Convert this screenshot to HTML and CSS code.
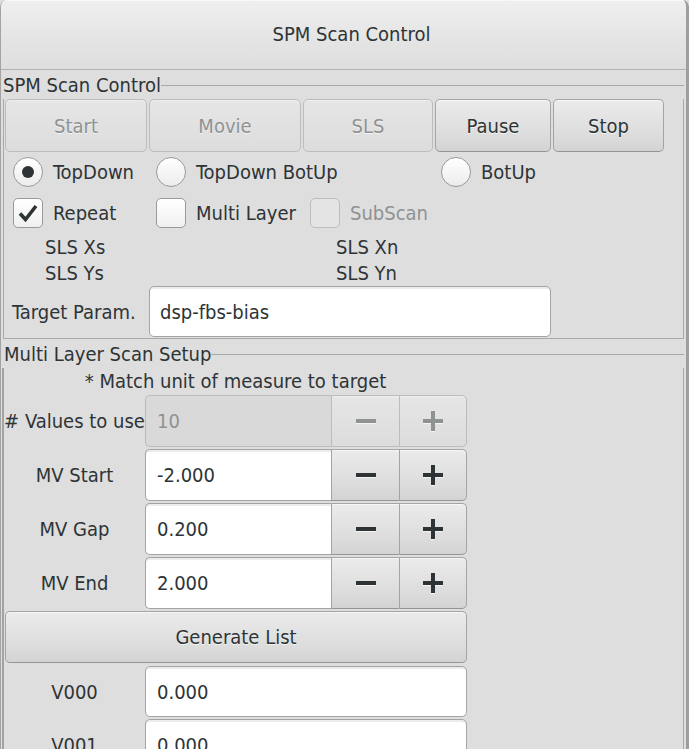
FILE: index.html
```html
<!DOCTYPE html>
<html>
<head>
<meta charset="utf-8">
<title>SPM Scan Control</title>
<link rel="stylesheet" href="styles.css">
</head>
<body>
<div class="window">
  <div class="titlebar"><span class="title">SPM Scan Control</span></div>
  <div class="content">
    <section class="frame">
      <div class="frame-head"><span class="frame-title">SPM Scan Control</span></div>
      <div class="frame-body">
        <div class="btn-row">
          <button class="btn w-start" disabled>Start</button>
          <button class="btn w-movie" disabled>Movie</button>
          <button class="btn w-sls" disabled>SLS</button>
          <button class="btn w-pause">Pause</button>
          <button class="btn w-stop">Stop</button>
        </div>
        <div class="radio-row">
          <div class="opt"><span class="radio on"></span>TopDown</div>
          <div class="opt"><span class="radio"></span>TopDown BotUp</div>
          <div class="opt"><span class="radio"></span>BotUp</div>
        </div>
        <div class="check-row">
          <div class="opt"><span class="check"><svg width="28" height="28" viewBox="0 0 28 28"><path d="M6 14.5 L11.5 20.5 L22 7" fill="none" stroke="#2e3436" stroke-width="3.6"/></svg></span>Repeat</div>
          <div class="opt"><span class="check"></span>Multi Layer</div>
          <div class="opt dis"><span class="check dis"></span>SubScan</div>
        </div>
        <div class="sls-grid">
          <span>SLS Xs</span><span>SLS Xn</span>
          <span>SLS Ys</span><span>SLS Yn</span>
        </div>
        <div class="target-row">
          <span class="target-label">Target Param.</span>
          <div class="entry target-entry">dsp-fbs-bias</div>
        </div>
      </div>
    </section>

    <section class="frame frame-ml">
      <div class="frame-head"><span class="frame-title ml-title">Multi Layer Scan Setup</span></div>
      <div class="frame-body ml-body">
        <div class="note">* Match unit of measure to target</div>
        <div class="ml-grid">
          <span class="lbl">#&nbsp;Values to use</span>
          <div class="spin dis">
            <div class="spin-entry">10</div>
            <div class="spin-btn"><svg width="20" height="20" viewBox="0 0 20 20"><rect x="0" y="8" width="20" height="4"/></svg></div>
            <div class="spin-btn last"><svg width="20" height="20" viewBox="0 0 20 20"><rect x="0" y="8" width="20" height="4"/><rect x="8" y="0" width="4" height="20"/></svg></div>
          </div>

          <span class="lbl">MV Start</span>
          <div class="spin">
            <div class="spin-entry">-2.000</div>
            <div class="spin-btn"><svg width="20" height="20" viewBox="0 0 20 20"><rect x="0" y="8" width="20" height="4"/></svg></div>
            <div class="spin-btn last"><svg width="20" height="20" viewBox="0 0 20 20"><rect x="0" y="8" width="20" height="4"/><rect x="8" y="0" width="4" height="20"/></svg></div>
          </div>

          <span class="lbl">MV Gap</span>
          <div class="spin">
            <div class="spin-entry">0.200</div>
            <div class="spin-btn"><svg width="20" height="20" viewBox="0 0 20 20"><rect x="0" y="8" width="20" height="4"/></svg></div>
            <div class="spin-btn last"><svg width="20" height="20" viewBox="0 0 20 20"><rect x="0" y="8" width="20" height="4"/><rect x="8" y="0" width="4" height="20"/></svg></div>
          </div>

          <span class="lbl">MV End</span>
          <div class="spin">
            <div class="spin-entry">2.000</div>
            <div class="spin-btn"><svg width="20" height="20" viewBox="0 0 20 20"><rect x="0" y="8" width="20" height="4"/></svg></div>
            <div class="spin-btn last"><svg width="20" height="20" viewBox="0 0 20 20"><rect x="0" y="8" width="20" height="4"/><rect x="8" y="0" width="4" height="20"/></svg></div>
          </div>

          <button class="btn gen">Generate List</button>

          <span class="lbl vlbl">V000</span>
          <div class="entry v-entry first">0.000</div>

          <span class="lbl">V001</span>
          <div class="entry v-entry">0.000</div>
        </div>
      </div>
    </section>
  </div>
</div>
</body>
</html>
```

FILE: styles.css
```css
html, body {
  margin: 0;
  padding: 0;
  background: #dedede;
}
body {
  font-family: "DejaVu Sans Condensed", "DejaVu Sans", sans-serif;
  font-size: 20px;
  color: #2e3436;
  overflow: hidden;
}
.window {
  width: 689px;
  height: 749px;
  box-sizing: border-box;
  border-left: 1px solid #a3a3a3;
  border-right: 3px solid #9e9e9e;
  border-radius: 7px 7px 0 0;
  overflow: hidden;
  background: #dedede;
}
.titlebar {
  height: 69px;
  border-bottom: 1px solid #b2b2b2;
  background: linear-gradient(#efefef, #e4e4e4 60%, #dedede);
  box-shadow: inset 0 1px #f8f8f8;
  display: flex;
  align-items: center;
  justify-content: center;
  padding-left: 16px;
  line-height: 69px;
}
.content {
  padding-top: 2px;
}
.frame {
  margin: 0 2px;
}
.frame-head {
  height: 27px;
  display: flex;
  align-items: center;
}
.frame-head::after {
  content: "";
  flex: 1;
  border-top: 1px solid #a9a9a9;
}
.frame-title {
  line-height: 27px;
  white-space: nowrap;
}
.ml-title {
  padding-left: 1px;
}
.frame-body {
  border: 1px solid #a9a9a9;
  border-top: none;
  padding: 0 0 1px 0;
}
.frame-ml {
  margin-top: 2px;
}
.ml-body {
  border-bottom: none;
  border-left: 2px solid #a3a3a3;
  margin-left: -1px;
  height: 400px;
}

/* buttons */
.btn {
  box-sizing: border-box;
  height: 53px;
  margin: 0;
  padding: 0;
  font: inherit;
  color: #2e3436;
  border: 1px solid #a4a4a4;
  border-bottom-color: #959595;
  border-radius: 5px;
  background: linear-gradient(#ebebeb, #dcdcdc 70%, #d3d3d3);
  box-shadow: inset 0 1px #f6f6f6;
  text-shadow: 0 1px #f4f4f4;
}
.btn:disabled {
  color: #8f9293;
  border-color: #bcbcbc;
  background: linear-gradient(#e6e6e6, #dcdcdc);
  box-shadow: inset 0 1px #efefef;
}
.btn-row {
  display: flex;
  gap: 2px;
  margin-left: 1px;
}
.w-start { width: 142px; }
.w-movie { width: 152px; }
.w-sls { width: 130px; }
.w-pause { width: 116px; }
.w-stop { width: 111px; }

/* options */
.radio-row {
  display: grid;
  grid-template-columns: 143px 285px auto;
  padding-left: 9px;
  margin-top: 5px;
  height: 30px;
}
.check-row {
  display: grid;
  grid-template-columns: 143px 154px auto;
  padding-left: 9px;
  margin-top: 11px;
  height: 30px;
}
.opt {
  display: flex;
  align-items: center;
  gap: 10px;
  white-space: nowrap;
}
.opt.dis {
  color: #8f9293;
}
.radio {
  box-sizing: border-box;
  width: 30px;
  height: 30px;
  border-radius: 50%;
  border: 1px solid #9a9a9a;
  background: linear-gradient(#ffffff, #ececec);
  display: flex;
  align-items: center;
  justify-content: center;
  flex: none;
}
.radio.on::after {
  content: "";
  width: 12px;
  height: 12px;
  border-radius: 50%;
  background: #2e3436;
}
.check {
  box-sizing: border-box;
  width: 30px;
  height: 30px;
  border-radius: 5px;
  border: 1px solid #9a9a9a;
  background: linear-gradient(#ffffff, #f0f0f0);
  display: flex;
  align-items: center;
  justify-content: center;
  flex: none;
}
.check.dis {
  background: #e4e4e4;
  border-color: #bdbdbd;
}
.sls-grid {
  display: grid;
  grid-template-columns: 291px auto;
  padding-left: 41px;
  margin-top: 6px;
  line-height: 26px;
}
.target-row {
  display: flex;
  align-items: center;
  padding-left: 8px;
}
.target-label {
  width: 137px;
  white-space: nowrap;
}
.entry {
  box-sizing: border-box;
  background: #ffffff;
  border: 1px solid #a4a4a4;
  border-radius: 5px;
  box-shadow: inset 0 2px #ececec;
  padding-left: 10px;
  display: flex;
  align-items: center;
}
.target-entry {
  width: 402px;
  height: 51px;
}

/* multi layer */
.note {
  width: 463px;
  text-align: center;
  line-height: 26px;
  white-space: nowrap;
}
.ml-grid {
  display: grid;
  grid-template-columns: 141px 322px;
  grid-auto-rows: 52px;
  row-gap: 2px;
  margin-top: 1px;
  width: 463px;
}
.lbl {
  display: flex;
  align-items: center;
  justify-content: center;
  white-space: nowrap;
}
.spin {
  display: flex;
  height: 52px;
}
.spin-entry {
  box-sizing: border-box;
  width: 186px;
  height: 52px;
  background: #ffffff;
  border: 1px solid #a4a4a4;
  border-right: none;
  border-radius: 5px 0 0 5px;
  box-shadow: inset 0 2px #ececec;
  padding-left: 11px;
  display: flex;
  align-items: center;
}
.spin-btn {
  box-sizing: border-box;
  width: 68px;
  height: 52px;
  border: 1px solid #a4a4a4;
  border-right: none;
  border-bottom-color: #959595;
  background: linear-gradient(#ebebeb, #dcdcdc 70%, #d3d3d3);
  box-shadow: inset 0 1px #f6f6f6;
  display: flex;
  align-items: center;
  justify-content: center;
  fill: #2e3436;
}
.spin-btn svg {
  filter: drop-shadow(0 1px 0 #f4f4f4);
}
.spin-btn.last {
  border-right: 1px solid #a4a4a4;
  border-radius: 0 5px 5px 0;
}
.spin.dis .spin-entry {
  background: #d9d9d9;
  color: #8f9293;
  border-color: #bcbcbc;
  box-shadow: none;
}
.spin.dis .spin-btn {
  border-color: #bcbcbc;
  background: linear-gradient(#e6e6e6, #dcdcdc);
  box-shadow: inset 0 1px #efefef;
  fill: #8f9293;
}
.gen {
  grid-column: 1 / 3;
  height: 52px;
  margin-left: 1px;
}
.vlbl {
  margin-top: 1px;
}
.v-entry {
  height: 52px;
  padding-left: 11px;
}
.v-entry.first {
  margin-top: 1px;
  height: 51px;
}
```
